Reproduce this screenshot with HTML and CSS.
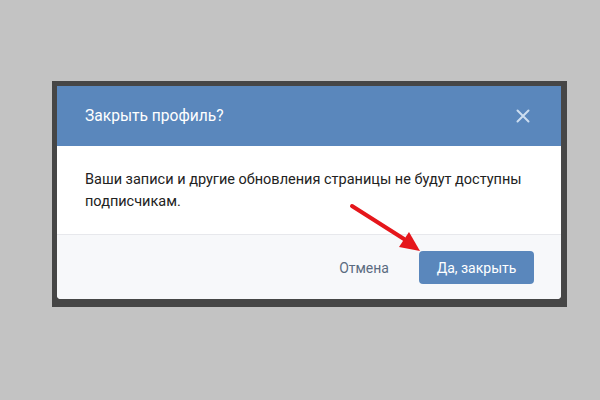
FILE: index.html
```html
<!DOCTYPE html>
<html lang="ru">
<head>
  <meta charset="UTF-8" />
  <title>Закрыть профиль?</title>
  <link rel="stylesheet" href="styles.css">
</head>
<body>
  <div class="frame">
    <div class="dialog">
      <div class="dialog-header">
        <span class="dialog-title">Закрыть профиль?</span>
        <svg class="close" width="14" height="14" viewBox="0 0 14 14">
          <path d="M1.5 1.5 L12.5 12.5 M12.5 1.5 L1.5 12.5" stroke="#cddef0" stroke-width="2" stroke-linecap="round" />
        </svg>
      </div>
      <div class="dialog-body">
        Ваши записи и другие обновления страницы не будут доступны подписчикам.
      </div>
      <div class="dialog-footer">
        <button class="btn-cancel">Отмена</button>
        <button class="btn-ok">Да, закрыть</button>
      </div>
    </div>
  </div>

  <!-- red pointer drawn over the screenshot -->
  <svg class="arrow" width="90" height="60" viewBox="0 0 90 60">
    <line x1="12" y1="11" x2="64" y2="44" stroke="#e5161b" stroke-width="4" stroke-linecap="round" />
    <polygon points="59,52 69,37 80,56" fill="#e5161b" />
  </svg>
</body>
</html>
```

FILE: styles.css
```css
* {
  box-sizing: border-box;
}

body {
  margin: 0;
  padding-top: 81px;
  height: 400px;
  background: #c3c3c3;
  font-family: Roboto, "Liberation Sans", sans-serif;
  position: relative;
}

.frame {
  width: 515px;
  margin-left: 52px;
  padding: 5px 6px 8px 5px;
  background: #464646;
}

.dialog {
  background: #fff;
  border-radius: 0 0 4px 4px;
  overflow: hidden;
}

.dialog-header {
  height: 60px;
  background: #5a87bc;
  display: flex;
  align-items: center;
  justify-content: space-between;
  padding: 0 31px 0 28px;
}

.dialog-title {
  color: #fff;
  font-size: 15.6px;
}

.dialog-body {
  padding: 23px 20px 21px 28px;
  font-size: 14.5px;
  line-height: 22px;
  color: #222;
  border-bottom: 1px solid #e7e8ec;
}

.dialog-footer {
  background: #f7f8fa;
  height: 64px;
  display: flex;
  align-items: flex-start;
  justify-content: flex-end;
  gap: 30px;
  padding: 16px 27px 0 0;
}

button {
  font-family: inherit;
  font-size: 14px;
  border: none;
  cursor: pointer;
}

.btn-cancel {
  background: none;
  color: #5b6b80;
  height: 33px;
  padding: 0;
}

.btn-ok {
  background: #5a87bc;
  color: #fff;
  height: 33px;
  width: 115px;
  border-radius: 4px;
}

.arrow {
  position: absolute;
  left: 340px;
  top: 195px;
}
```
